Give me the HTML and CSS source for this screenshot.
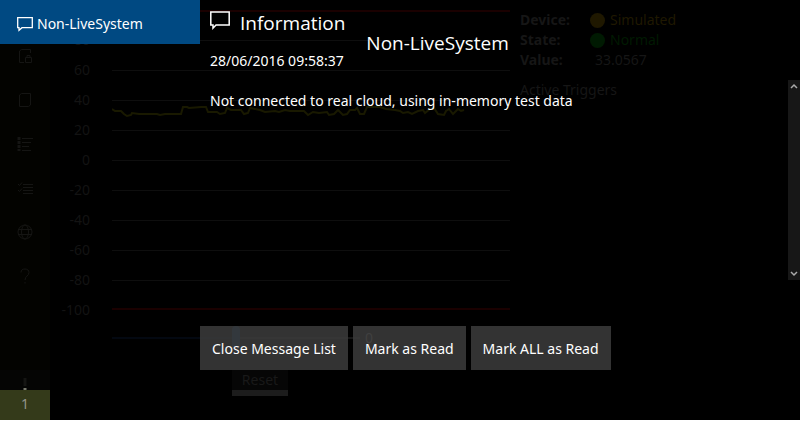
FILE: index.html
```html
<!DOCTYPE html>
<html lang="en">
<head>
<meta charset="utf-8">
<title>Device Monitor</title>
<meta name="viewport" content="width=device-width, initial-scale=1">
<link rel="stylesheet" href="styles.css">
</head>
<body>
<div class="app">
  <nav class="rail" aria-label="Main">
    <a class="rail-item" href="#" aria-label="Home"><svg viewBox="0 0 16 16"><circle cx="8" cy="8" r="7"/><circle cx="8" cy="8" r="3"/></svg></a>
    <a class="rail-item" href="#" aria-label="Secure document"><svg viewBox="0 0 16 16"><path d="M7 14.500H2.500V3L4.500 1.500h9V5M8.500 9.500h6v5h-6zM10 9V7.500h3V9"/></svg></a>
    <a class="rail-item" href="#" aria-label="Document"><svg viewBox="0 0 16 16"><path d="M4.500 1.500h9V13L11.500 14.500h-9V3z"/></svg></a>
    <a class="rail-item" href="#" aria-label="List"><svg viewBox="0 0 16 16"><path class="thick" d="M2 1v14" stroke-dasharray="3 1"/><path d="M5 2.500h11M5 6.500h9M5 10.500h7M5 14.500h9"/></svg></a>
    <a class="rail-item" href="#" aria-label="Tasks"><svg viewBox="0 0 16 16"><path d="M1 4l1.500 1.500L5 2.500M1 10l1.500 1.500L5 8.500M6 4.500h10M6 7.500h10M6 10.500h10M6 13.500h10"/></svg></a>
    <a class="rail-item" href="#" aria-label="Web"><svg viewBox="0 0 16 16"><circle cx="8" cy="8" r="7"/><ellipse cx="8" cy="8" rx="3.500" ry="7"/><path d="M1 5.500h14M1 10.500h14"/></svg></a>
    <a class="rail-item" href="#" aria-label="Help"><svg viewBox="0 0 16 16"><path d="M4 4.500C4 2 5.500 1 8 1s4 1.500 4 3.500C12 8 8 8 8 12M8 14v1.500"/></svg></a>
    <div class="rail-end">
      <span class="alert"><svg viewBox="0 0 4 12"><path d="M2 0v8"/><path class="lit" d="M2 10v2"/></svg></span>
      <span class="count">1</span>
    </div>
  </nav>

  <main class="content">
    <section class="monitor">
      <div class="chart">
        <ol class="scale">
          <li>100</li><li>80</li><li>60</li><li>40</li><li>20</li><li>0</li><li>-20</li><li>-40</li><li>-60</li><li>-80</li><li>-100</li>
        </ol>
        <svg class="plot" viewBox="0 0 398 320" preserveAspectRatio="none" aria-label="Value history">
          <path class="grid" d="M0 40.500h398M0 70.500h398M0 100.500h398M0 130.500h398M0 160.500h398M0 190.500h398M0 220.500h398M0 250.500h398M0 280.500h398"/>
          <path class="limit" d="M0 11h398M0 309h398"/>
          <path class="series" d="M0 109l3 2 6 0 3 3 3 2 4-1 1-2 7 1 18 0 3 1 5-1 3 0 13 0 2-7 4 0 2 1 12-1 5 0 2 5 9 0 3 2 5-1 2-5 4 2 10 0 3 4 4-1 2-5 10 2 5 2 10-1 4 1 6-2 5 1 14 0 4 4 5-3 6 1 8-1 2 3 5-1 4-4 5 5 4-1 3-4 5 0 2-2 3 6 4 0 3-7 5 0 8 0 6 2 9 1 5 1 3 2 5-1 4 2 6-3 5-1 2 3 5-4 4-1 4 6 6 1 2-4 3-2 4 5 5-5 3 2 3-1"/>
        </svg>
      </div>
      <div class="adjust">
        <input class="slider" id="level" type="range" min="-100" max="100" value="0" aria-label="Level">
        <output class="level" for="level">0</output>
      </div>
      <button class="reset" type="button">Reset</button>
    </section>
    <section class="details">
      <dl class="facts">
        <dt>Device:</dt><dd class="simulated"><i class="dot"></i>Simulated</dd>
        <dt>State:</dt><dd class="normal"><i class="dot"></i>Normal</dd>
        <dt>Value:</dt><dd class="value">33.0567</dd>
      </dl>
      <h2 class="triggers">Active Triggers</h2>
    </section>
  </main>

  <section class="messages" aria-label="Messages">
    <aside class="message-list">
      <button class="message-item" type="button"><svg class="bubble" viewBox="0 0 16 16"><path d="M.7 1.700h14.600v10H5l-3 2.600v-2.600H.7z"/></svg>Non-LiveSystem</button>
    </aside>
    <div class="message-pane">
      <article class="message">
        <header class="message-head">
          <svg class="bubble large" viewBox="0 0 20 20"><path d="M.8 1h18.400v13H6l-3 3.200V14H.8z"/></svg>
          <h1 class="kind">Information</h1>
          <p class="source">Non-LiveSystem</p>
        </header>
        <time class="date">28/06/2016 09:58:37</time>
        <p class="text">Not connected to real cloud, using in-memory test data</p>
      </article>
      <div class="actions">
        <button type="button">Close Message List</button>
        <button type="button">Mark as Read</button>
        <button type="button">Mark ALL as Read</button>
      </div>
      <div class="scroll" aria-hidden="true">
        <svg viewBox="0 0 8 6"><path d="M1 5l3-3 3 3"/></svg>
        <svg viewBox="0 0 8 6"><path d="M1 1l3 3 3-3"/></svg>
      </div>
    </div>
  </section>
</div>
</body>
</html>
```
FILE: styles.css
```css
* { box-sizing: border-box; }
body { margin: 0; background: #fff; color: #fff; font: 14px/20px "Noto Sans", "Open Sans", sans-serif; }
h1, h2, p, ol, dl, dd { margin: 0; padding: 0; font-weight: 400; font-size: inherit; }
button { margin: 0; border: 0; font: inherit; color: inherit; }
svg { display: block; fill: none; stroke: currentColor; }

.app { position: relative; display: flex; min-height: calc(100vh - 1px); margin: 0 2px 1px 0; background: #000; }

.rail { display: flex; flex-direction: column; width: 50px; margin-top: -10px; background: #030300; color: #151513; }
.rail-item { display: flex; align-items: center; justify-content: center; height: 44px; color: inherit; }
.rail-item svg { width: 16px; height: 16px; }
.thick { stroke-width: 3; }
.rail-end { margin-top: auto; text-align: center; }
.alert { display: flex; justify-content: center; align-items: flex-end; height: 20px; background: #050504; }
.alert svg { width: 4px; height: 12px; stroke-width: 3; }
.lit { stroke: #77796c; }
.count { display: block; height: 30px; line-height: 28px; background: #343a1a; color: #93958a; }

.content { display: flex; flex: 1; color: #161616; }
.monitor { flex: 0 1 460px; }
.chart { display: grid; grid-template-columns: 40px 1fr; gap: 22px; height: 320px; }
.scale { list-style: none; text-align: right; display: grid; grid-auto-rows: 30px; color: #131313; }
.plot { width: 100%; height: 320px; }
.grid { stroke: #0e0e0e; }
.limit { stroke: #1a0000; stroke-width: 2; }
.series { stroke: #191900; stroke-width: 2; }
.adjust { display: flex; align-items: center; gap: 5px; height: 36px; padding-left: 62px; }
.slider { appearance: none; width: 248px; height: 24px; margin: 0; background: linear-gradient(90deg, #030811 50%, #161616 50%) center / 100% 2px no-repeat; }
.slider::-webkit-slider-thumb { appearance: none; width: 8px; height: 24px; border-radius: 4px; background: #002744; }
.level { color: #585858; }
.reset { display: block; width: 56px; height: 31px; margin: 9px 0 0 182px; padding: 5px 0 0; background: #060606; color: #191919; border-bottom: 6px solid #1c1c1c; }

.details { flex: 1; padding: 10px; }
.facts { display: grid; grid-template-columns: 70px 1fr; }
.facts dt { font-weight: 700; }
.facts dd { display: flex; align-items: center; gap: 5px; }
.dot { width: 15px; height: 15px; border-radius: 50%; background: currentColor; }
.simulated { color: #1f1800; }
.normal { color: #001a02; }
.facts .value { padding-left: 5px; }
.triggers { margin-top: 10px; }

.messages { position: absolute; inset: 0; display: flex; }
.message-list { width: 200px; }
.message-item { display: flex; align-items: center; gap: 4px; width: 100%; height: 44px; padding: 4px 17px 0; background: rgba(0, 75, 134, 0.97); }
.bubble { width: 16px; height: 16px; stroke-width: 1.300; }
.bubble.large { width: 20px; height: 20px; stroke-width: 1.500; }
.message-pane { position: relative; flex: 1; display: flex; flex-direction: column; align-items: flex-start; }
.message { height: 326px; padding: 11px 10px 0; }
.message-head { display: flex; align-items: flex-start; gap: 10px; height: 40px; font: 19px/24px "Open Sans", "Noto Sans", sans-serif; }
.source { margin: 20px 0 0 11px; }
.date { display: block; }
.text { margin-top: 20px; }
.actions { display: flex; gap: 5px; }
.actions button { height: 44px; padding: 2px 12px 0; background: rgba(60, 60, 60, 0.85); white-space: nowrap; }
.scroll { position: absolute; top: 80px; right: 0; width: 12px; height: 200px; padding: 3px 2px; display: flex; flex-direction: column; justify-content: space-between; background: #171717; color: #aaa; }
.scroll svg { width: 8px; height: 6px; stroke-width: 1.500; }
```
